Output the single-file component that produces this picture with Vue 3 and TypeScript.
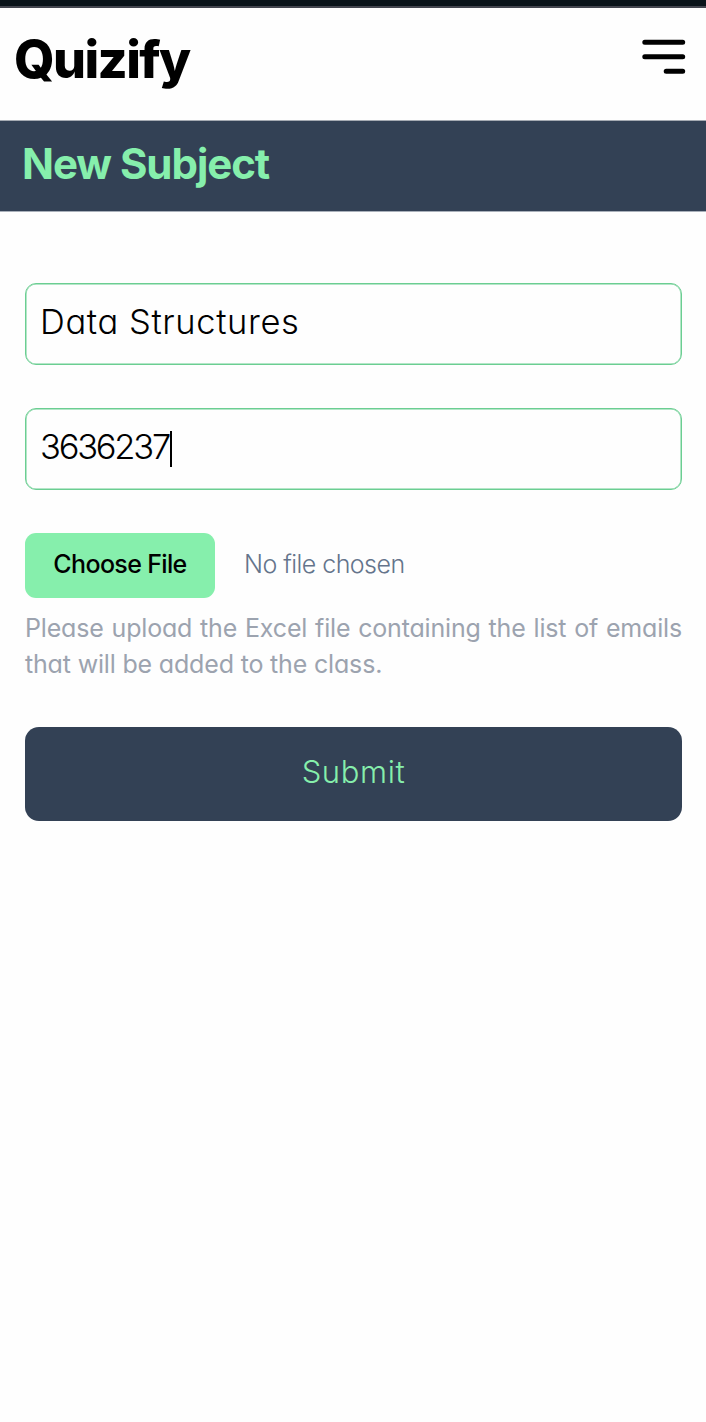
<script setup lang="ts">
import { ref } from 'vue'

const subjectName = ref<string>('Data Structures')
const subjectCode = ref<string>('3636237')
const fileName = ref<string>('')
</script>

<template>
  <div class="page">
    <div class="status-strip"></div>
    <header class="topbar">
      <span class="brand">Quizify</span>
      <button class="menu" type="button" aria-label="Menu">
        <svg width="44" height="36" viewBox="0 0 44 36" fill="none" stroke="#000" stroke-width="5" stroke-linecap="round">
          <path d="M2.8 3.2H40.7M2.8 17.7H40.7M24.2 32.2H40.7" />
        </svg>
      </button>
    </header>
    <div class="title-bar">
      <h1 class="title">New Subject</h1>
    </div>
    <form class="form" @submit.prevent>
      <div class="field"><span class="value name">{{ subjectName }}</span></div>
      <div class="field"><span class="value code">{{ subjectCode }}</span><i class="caret"></i></div>
      <div class="file-row">
        <button class="choose" type="button">Choose File</button>
        <span class="file-name">{{ fileName || 'No file chosen' }}</span>
      </div>
      <p class="hint">Please upload the Excel file containing the list of emails that will be added to the class.</p>
      <button class="submit" type="submit">Submit</button>
    </form>
  </div>
</template>

<style>
html,
body {
  background: #fefefe;
}
</style>

<style scoped>
.page {
  min-height: 1422px;
  background: #fefefe;
  color: #000;
  font-family: Inter, 'Open Sans', sans-serif;
  font-feature-settings: 'cv11' 1;
  overflow: hidden;
}
.page button {
  font-family: inherit;
  font-feature-settings: inherit;
  border: 0;
  margin: 0;
  padding: 0;
}
.status-strip {
  box-sizing: border-box;
  height: 8px;
  background: #0b141a;
  border-bottom: 2px solid #44464f;
}
.topbar {
  box-sizing: border-box;
  height: 113px;
  padding: 30px 20px 0 14px;
  display: flex;
  justify-content: space-between;
  align-items: flex-start;
  border-bottom: 1px solid #a6abb3;
}
.brand {
  font-size: 52px;
  line-height: 44px;
  font-weight: 800;
  letter-spacing: -1.6px;
}
.page .menu {
  display: flex;
  margin-top: 1px;
  background: none;
}
.title-bar {
  box-sizing: border-box;
  height: 91px;
  padding: 18px 22px 0;
  background: #334155;
  border-bottom: 1px solid #a9b0ba;
}
.title {
  margin: 0;
  color: #86efac;
  font-size: 42px;
  line-height: 50px;
  font-weight: 700;
  letter-spacing: -1.05px;
  white-space: nowrap;
}
.form {
  padding: 71px 24px 0 25px;
}
.field {
  box-sizing: border-box;
  height: 82px;
  margin-bottom: 43px;
  padding: 0 14px 4px;
  border: 1px solid #6bce92;
  box-shadow: inset 0 0 0 0.5px #6bce92;
  border-radius: 11px;
  display: flex;
  align-items: center;
}
.value {
  font-size: 34.5px;
  line-height: 40px;
  font-weight: 300;
  white-space: nowrap;
}
.name {
  letter-spacing: 0.6px;
}
.code {
  letter-spacing: -2.25px;
}
.caret {
  width: 2px;
  height: 36px;
  margin-top: 4px;
  margin-left: 1px;
  background: #000;
}
.file-row {
  display: flex;
  height: 65px;
}
.page .choose {
  width: 190px;
  height: 65px;
  padding-bottom: 4px;
  border-radius: 11px;
  background: #86efac;
  color: #000;
  font-size: 25px;
  font-weight: 500;
  letter-spacing: -0.65px;
  white-space: nowrap;
}
.file-name {
  margin-left: 29px;
  padding-top: 13px;
  color: #64748b;
  font-size: 25px;
  line-height: 36px;
  font-weight: 300;
  letter-spacing: -0.55px;
  white-space: nowrap;
}
.hint {
  margin: 12px 0 0;
  color: #9ca3af;
  font-size: 25px;
  line-height: 36px;
  font-weight: 400;
  letter-spacing: -0.17px;
  text-align: justify;
}
.page .submit {
  display: block;
  width: 657px;
  height: 94px;
  margin-top: 45px;
  padding-bottom: 6px;
  border-radius: 14px;
  background: #334155;
  color: #86efac;
  font-size: 31px;
  font-weight: 300;
  letter-spacing: 0.6px;
}
</style>
